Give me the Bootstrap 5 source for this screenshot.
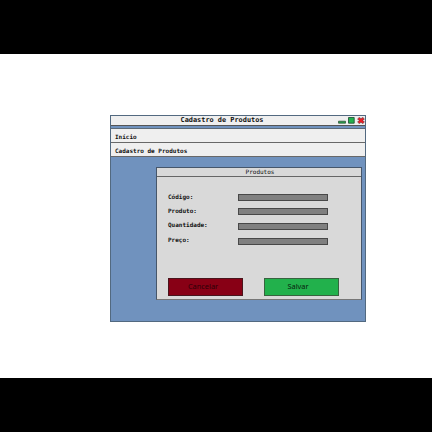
<!DOCTYPE html>
<html lang="pt-BR">
<head>
<meta charset="utf-8">
<meta name="viewport" content="width=device-width, initial-scale=1">
<title>Cadastro de Produtos</title>
<link href="https://cdn.jsdelivr.net/npm/bootstrap@5.3.0/dist/css/bootstrap.min.css" rel="stylesheet">
<style>
body{height:432px;overflow:hidden;background:#fff;color:#111;font:bold 6px/8px "DejaVu Sans Mono",monospace}
.band{height:54px;background:#000}
.stage{height:324px;padding:61px 66px 0 110px}
.app-window{height:207px;background:#7092be;border:1px solid #526980}
.title-bar{height:10px;background:#efefef;border-bottom:1px solid #555;display:grid;grid-template-columns:1fr auto 1fr}
.title-text{font-size:6.9px;line-height:9px;grid-column:2;transform:translateX(-16px)}
.controls{grid-column:3;gap:2px;padding:1px .4px 0 0}
.menu-item{height:14px;background:#efefef;border-bottom:1px solid #686868;padding:4px 0 0 4px}
.menu-first{margin-top:2px;height:15px;border-top:1px solid #5d6b78}
.panel{margin:10px 3px 0 45px;height:133px;background:#d9d9d9;border:1px solid #46566a;border-bottom-color:#777}
.panel-head{height:9px;border-bottom:1px solid #666;font-weight:400;line-height:8px;padding-left:2px}
.fields{padding:16px 0 0 11px;height:101px}
.field-row{height:14px}
.field-row.tall{height:15px}
.field-row label{width:70px;line-height:8px}
.field-row .raised{margin-top:-1px}
.field-box{width:90px;height:7px;margin-top:1px;background:#808080;border:1px solid #484848;border-radius:0;padding:0;min-height:0}
.actions{padding-left:11px;gap:21px}
.action{width:75px;height:18px;padding:0;border:1px solid #333;border-radius:0;font:400 7.4px/13px "Noto Sans",sans-serif;color:#111}
.cancel{background:#880015;border-color:#49151c;color:#2c0008;padding:0 5px 2px 0}
.save{background:#22b14c;border-color:#37643f;color:#08210f;padding:0 7px 2px 0}
</style>
<script src="https://cdn.jsdelivr.net/npm/bootstrap@5.3.0/dist/js/bootstrap.bundle.min.js"></script>
</head>
<body>
<div class="band"></div>
<main class="stage">
<section class="app-window">
<header class="title-bar">
<span class="title-text">Cadastro de Produtos</span>
<div class="controls d-flex justify-content-end">
<svg width="8" height="7" viewBox="0 0 8 7"><path d="M.5 4.2h7v2h-7z" fill="#22a34a" stroke="#35563d" stroke-width=".8"/></svg>
<svg width="7" height="7" viewBox="0 0 7 7"><path d="M.5.5h5.7v5.7H.5z" fill="#22b14c" stroke="#27553a" stroke-width=".9"/></svg>
<svg width="8" height="7" viewBox="0 0 8 7"><path d="M.6 1.9 2.3.4 4 1.7 5.7.4l1.7 1.5-1.6 1.6 1.6 1.6-1.7 1.5L4 5.3 2.3 6.6.6 5.1l1.6-1.6z" fill="#ed1c24" stroke="#65383b" stroke-width=".7"/></svg>
</div>
</header>
<nav>
<div class="menu-item menu-first">Início</div>
<div class="menu-item">Cadastro de Produtos</div>
</nav>
<form class="panel">
<div class="panel-head text-center">Produtos</div>
<div class="fields">
<div class="field-row d-flex"><label for="codigo">Código:</label><input id="codigo" class="form-control field-box"></div>
<div class="field-row tall d-flex"><label for="produto">Produto:</label><input id="produto" class="form-control field-box"></div>
<div class="field-row tall d-flex"><label class="raised" for="quantidade">Quantidade:</label><input id="quantidade" class="form-control field-box"></div>
<div class="field-row d-flex"><label class="raised" for="preco">Preço:</label><input id="preco" class="form-control field-box"></div>
</div>
<div class="actions d-flex">
<button type="button" class="btn action cancel">Cancelar</button>
<button type="button" class="btn action save">Salvar</button>
</div>
</form>
</section>
</main>
<div class="band"></div>
</body>
</html>
